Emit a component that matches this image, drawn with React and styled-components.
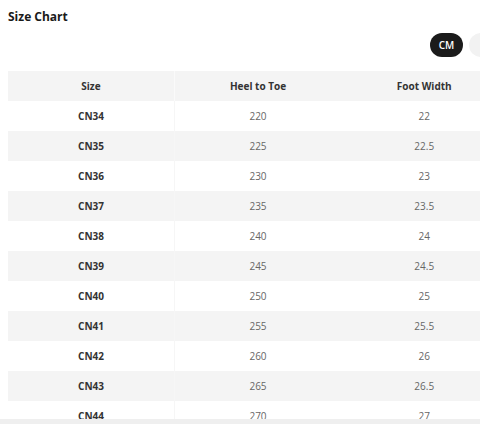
import React from "react"
import styled, { createGlobalStyle } from "styled-components"

const rows = [
  ["CN34", "220", "22"],
  ["CN35", "225", "22.5"],
  ["CN36", "230", "23"],
  ["CN37", "235", "23.5"],
  ["CN38", "240", "24"],
  ["CN39", "245", "24.5"],
  ["CN40", "250", "25"],
  ["CN41", "255", "25.5"],
  ["CN42", "260", "26"],
  ["CN43", "265", "26.5"],
  ["CN44", "270", "27"],
]

const App = () => {
  return (
    <>
      <GlobalStyle />
      <Page>
        <Title>Size Chart</Title>
        <UnitBar>
          <UnitButton $active>CM</UnitButton>
          <UnitButton $wide>INCH</UnitButton>
        </UnitBar>
        <Table>
          <thead>
            <tr>
              <HeadCell>Size</HeadCell>
              <HeadCell>Heel to Toe</HeadCell>
              <HeadCell>Foot Width</HeadCell>
            </tr>
          </thead>
          <tbody>
            {rows.map(([size, heel, width]) => (
              <Row key={size}>
                <SizeCell>{size}</SizeCell>
                <Cell>{heel}</Cell>
                <Cell>{width}</Cell>
              </Row>
            ))}
          </tbody>
        </Table>
      </Page>
      <BottomBar />
    </>
  )
}

const GlobalStyle = createGlobalStyle`
  html, body {
    margin: 0;
    overflow: hidden;
    background: #fff;
  }
  body {
    font-family: "Open Sans", "Liberation Sans", sans-serif;
  }
`

const Page = styled.div`
  width: 500px;
  padding: 0 8px;
`

const Title = styled.h2`
  margin: 0;
  padding-top: 9px;
  font-size: 12px;
  line-height: 16px;
  font-weight: 700;
  color: #1a1a1a;
`

const UnitBar = styled.div`
  display: flex;
  justify-content: flex-end;
  gap: 6px;
  margin-top: 8px;
  margin-right: -14px;
  height: 24px;
`

const UnitButton = styled.button`
  height: 24px;
  padding: ${({ $wide }) => ($wide ? "0 14px" : "0 9px")};
  border: none;
  border-radius: 12px;
  font-family: inherit;
  font-size: 10px;
  font-weight: 600;
  background: ${({ $active }) => ($active ? "#1b1b1b" : "#f2f2f2")};
  color: ${({ $active }) => ($active ? "#fff" : "#333")};
`

const Table = styled.table`
  width: 500px;
  margin-top: 14px;
  border-collapse: collapse;
  table-layout: fixed;
`

const HeadCell = styled.th`
  height: 30px;
  padding: 0;
  background: #f4f4f4;
  font-size: 10px;
  font-weight: 700;
  color: #333;
  text-align: center;

  &:first-child {
    border-right: 1px solid #fafafa;
  }
`

const Row = styled.tr`
  &:nth-child(even) td {
    background: #f4f4f4;
  }
`

const Cell = styled.td`
  height: 30px;
  padding: 0;
  font-size: 10px;
  color: #666;
  text-align: center;
`

const SizeCell = styled(Cell)`
  font-weight: 700;
  color: #333;
  border-right: 1px solid #f6f6f6;
`

const BottomBar = styled.div`
  position: fixed;
  left: 0;
  right: 0;
  bottom: 0;
  height: 5px;
  background: #efefef;
`

export default App
